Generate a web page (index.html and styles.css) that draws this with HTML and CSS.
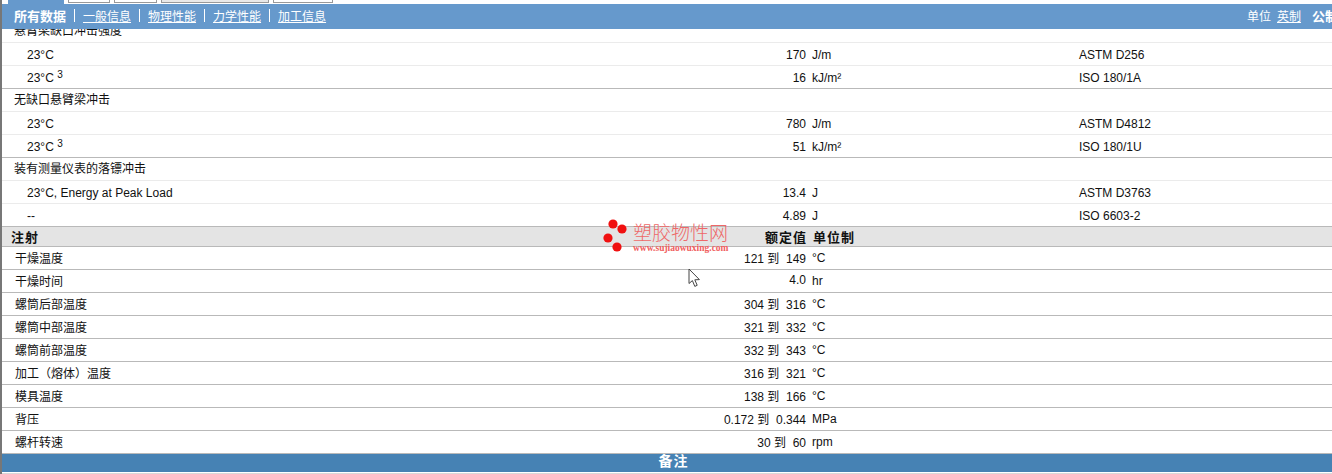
FILE: index.html
```html
<!DOCTYPE html>
<html lang="zh">
<head>
<meta charset="utf-8">
<title>塑胶物性</title>
<link rel="stylesheet" href="styles.css">
</head>
<body>
<div class="page">
  <div class="tabs">
    <span class="tab tab-active tab-a"></span>
    <span class="tab tab-b"></span>
    <span class="tab tab-c"></span>
    <span class="tab tab-grey tab-d"></span>
    <span class="tab tab-e"></span>
  </div>
  <nav class="nav">
    <div class="nav-links">
      <b class="nav-current">所有数据</b><i class="sep"></i>
      <a href="#a">一般信息</a><i class="sep"></i>
      <a href="#b">物理性能</a><i class="sep"></i>
      <a href="#c">力学性能</a><i class="sep"></i>
      <a href="#d">加工信息</a>
    </div>
    <div class="nav-units">
      <span>单位</span><a href="#e">英制</a><i class="sep sep-small"></i><b>公制</b>
    </div>
  </nav>
  <div class="table">
    <div class="row group clipped"><span class="name">悬臂梁缺口冲击强度</span></div>
    <div class="row sub"><span class="name">23°C</span><span class="val">170</span><span class="unit">J/m</span><span class="std">ASTM D256</span></div>
    <div class="row sub last"><span class="name">23°C <sup>3</sup></span><span class="val">16</span><span class="unit">kJ/m²</span><span class="std">ISO 180/1A</span></div>
    <div class="row group"><span class="name">无缺口悬臂梁冲击</span></div>
    <div class="row sub"><span class="name">23°C</span><span class="val">780</span><span class="unit">J/m</span><span class="std">ASTM D4812</span></div>
    <div class="row sub last"><span class="name">23°C <sup>3</sup></span><span class="val">51</span><span class="unit">kJ/m²</span><span class="std">ISO 180/1U</span></div>
    <div class="row group"><span class="name">装有测量仪表的落镖冲击</span></div>
    <div class="row sub"><span class="name">23°C, Energy at Peak Load</span><span class="val">13.4</span><span class="unit">J</span><span class="std">ASTM D3763</span></div>
    <div class="row sub last"><span class="name">--</span><span class="val">4.89</span><span class="unit">J</span><span class="std">ISO 6603-2</span></div>
    <div class="row head"><span class="name">注射</span><span class="val">额定值</span><span class="unit">单位制</span></div>
    <div class="row item"><span class="name">干燥温度</span><span class="val">121 到&nbsp; 149</span><span class="unit">°C</span></div>
    <div class="row item"><span class="name">干燥时间</span><span class="val">4.0</span><span class="unit">hr</span></div>
    <div class="row item"><span class="name">螺筒后部温度</span><span class="val">304 到&nbsp; 316</span><span class="unit">°C</span></div>
    <div class="row item"><span class="name">螺筒中部温度</span><span class="val">321 到&nbsp; 332</span><span class="unit">°C</span></div>
    <div class="row item"><span class="name">螺筒前部温度</span><span class="val">332 到&nbsp; 343</span><span class="unit">°C</span></div>
    <div class="row item"><span class="name">加工（熔体）温度</span><span class="val">316 到&nbsp; 321</span><span class="unit">°C</span></div>
    <div class="row item"><span class="name">模具温度</span><span class="val">138 到&nbsp; 166</span><span class="unit">°C</span></div>
    <div class="row item"><span class="name">背压</span><span class="val">0.172 到&nbsp; 0.344</span><span class="unit">MPa</span></div>
    <div class="row item"><span class="name">螺杆转速</span><span class="val">30 到&nbsp; 60</span><span class="unit">rpm</span></div>
    <div class="notes">备注</div>
    <div class="notes-rule"></div>
  </div>
  <div class="watermark">
    <svg class="wm-dots" width="26" height="34" viewBox="0 0 26 34"><circle cx="10" cy="6" r="4.6"/><circle cx="19" cy="11" r="4.6"/><circle cx="5" cy="20" r="4.6"/><circle cx="14" cy="29" r="4.6"/></svg>
    <div class="wm-text">
      <div class="wm-title">塑胶物性网</div>
      <div class="wm-url">www.sujiaowuxing.com</div>
    </div>
  </div>
  <svg class="cursor" width="14" height="20" viewBox="0 0 14 20"><path d="M1 1 V15.5 L4.4 12.6 L6.8 18.4 L9.2 17.3 L6.8 11.8 L11.4 11.6 Z" fill="#fff" stroke="#444" stroke-width="1"/></svg>
</div>
</body>
</html>
```
FILE: styles.css
```css
* { box-sizing: border-box; }
html, body { margin: 0; padding: 0; height: 100%; overflow: hidden; background: #fff; }
body { font-family: "Liberation Sans", "Noto Sans CJK SC", sans-serif; font-size: 12px; color: #111; }
.page { position: relative; width: 1332px; height: 474px; overflow: hidden; border-left: 2px solid #777; }
.tabs { display: flex; height: 4px; padding-left: 6px; gap: 4px; }
.tab { display: block; height: 3px; border: 1px solid #999; border-top: 0; background: #fff; }
.tab-active { background: #6699cc; border-color: #6699cc; height: 4px; }
.tab-grey { background: #e8e8e8; }
.tab-a { width: 56px; }
.tab-b { width: 42px; }
.tab-c { width: 43px; }
.tab-d { width: 108px; }
.tab-e { width: 60px; }
.nav { display: flex; justify-content: space-between; align-items: center; height: 25px; margin-left: -2px; width: 1334px; background: #6699cc; color: #fff; padding: 0 0 2px 14px; font-size: 12px; }
.nav a { color: #fff; text-decoration: underline; }
.nav-links { display: flex; align-items: center; gap: 8px; }
.nav-current { font-weight: 700; font-size: 13px; }
.sep { display: block; width: 1px; height: 13px; background: #fff; }
.sep-small { height: 11px; margin: 0 5px 0 6px; }
.nav-units { display: flex; align-items: center; width: 87px; white-space: nowrap; flex: none; }
.nav-units a { margin-left: 6px; }
.nav-units b { font-size: 13px; }
.table { display: flex; flex-direction: column; }
.row { display: grid; grid-template-columns: 1fr 68px 273px 253px; column-gap: 0; height: 23px; align-items: center; border-bottom: 1px solid #ebebeb; white-space: nowrap; }
.name { grid-column: 1; padding-left: 12px; }
.val { grid-column: 2; justify-self: end; }
.unit { grid-column: 3; padding-left: 6px; }
.std { grid-column: 4; }
.sub { padding-top: 2px; }
.sub .name { padding-left: 25px; }
.last { border-bottom-color: #b9b9b9; }
.group { padding-bottom: 4px; }
.clipped { height: 14px; overflow: hidden; padding-bottom: 0; align-items: end; align-content: end; }
.clipped .name { margin-bottom: 4px; }
sup { font-size: 10px; line-height: 0; vertical-align: 4px; }
.head { height: 20px; background: #e4e4e4; border-bottom: 1px solid #b9b9b9; font-size: 13px; font-weight: 700; letter-spacing: 1px; padding-bottom: 2px; }
.head .name { padding-left: 9px; }
.head .val { margin-right: -1px; }
.head .unit { padding-left: 7px; }
.item { border-bottom-color: #b9b9b9; padding-bottom: 2px; }
.item .name { padding-left: 13px; }
.item .unit { margin-top: 2px; }
.notes { height: 18px; background: #4682b4; color: #fff; font-weight: 700; font-size: 14px; line-height: 15px; text-align: center; letter-spacing: 1px; padding-left: 13px; }
.notes-rule { height: 1px; margin-top: 1px; background: #d8d8d8; }
.watermark { position: absolute; left: 601px; top: 218px; display: flex; gap: 4px; pointer-events: none; }
.wm-dots { display: block; fill: #f01010; }
.wm-text { padding-top: 6px; color: #ee6868; }
.wm-title { font-size: 19px; line-height: 20px; font-weight: 300; letter-spacing: 0; }
.wm-url { font-family: "Liberation Serif", serif; font-size: 9.5px; line-height: 9px; font-weight: 700; color: #f06060; }
.cursor { position: absolute; left: 686px; top: 268px; }
```
